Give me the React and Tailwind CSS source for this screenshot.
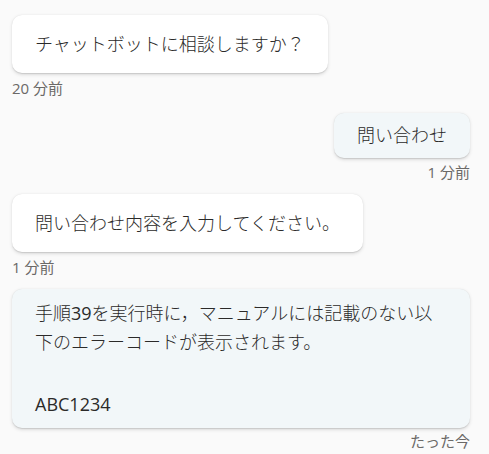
export default function App() {
  const bubbleBase =
    "rounded-[10px] px-[23px] text-[18px] font-light text-[#2b2a29] shadow-[0_1.6px_3.6px_rgba(0,0,0,0.12),0_0.3px_0.9px_rgba(0,0,0,0.1)]";
  const ts = "text-[15px] leading-[20px] font-normal text-[#6b6967]";
  return (
    <div className="min-h-screen bg-[#fafafa] pl-3 pr-[19px] pt-[15px] font-['Open_Sans','Noto_Sans_CJK_JP',sans-serif]">
      <div className="flex flex-col items-start">
        <div className={`${bubbleBase} bg-white py-[14px] leading-[30px]`}>
          チャットボットに相談しますか？
        </div>
        <div className={`${ts} mt-[5px]`}>20 分前</div>
      </div>

      <div className="mt-[15px] flex flex-col items-end">
        <div className={`${bubbleBase} bg-[#f2f7f9] py-[8px] leading-[29px]`}>
          問い合わせ
        </div>
        <div className={`${ts} mt-[4px]`}>1 分前</div>
      </div>

      <div className="mt-[12px] flex flex-col items-start">
        <div className={`${bubbleBase} bg-white py-[14px] leading-[30px]`}>
          問い合わせ内容を入力してください。
        </div>
        <div className={`${ts} mt-[5px]`}>1 分前</div>
      </div>

      <div className="mt-[12px] flex flex-col items-end">
        <div className={`${bubbleBase} w-full bg-[#f2f7f9] pt-[10px] pb-[9px] leading-[29px]`}>
          <p>
            手順<span className="font-normal">39</span>を実行時に，マニュアルには記載のない以
            <br />
            下のエラーコードが表示されます。
          </p>
          <p className="mt-[33px] font-normal">ABC1234</p>
        </div>
        <div className={`${ts} mt-[3px]`}>たった今</div>
      </div>
    </div>
  );
}
